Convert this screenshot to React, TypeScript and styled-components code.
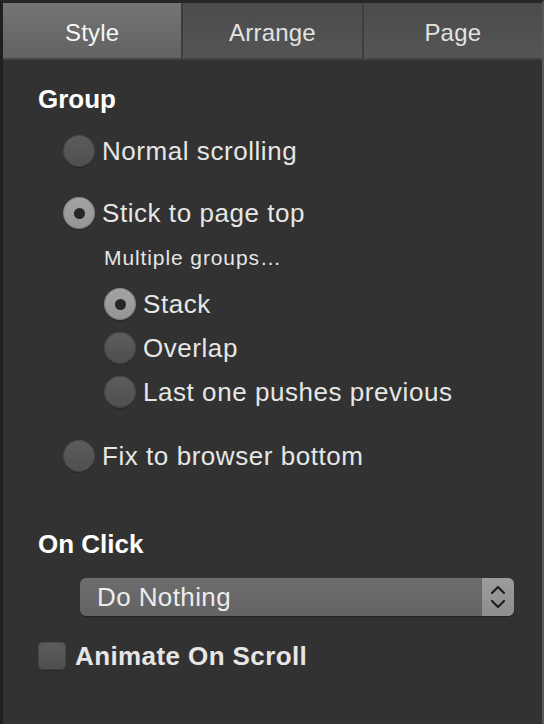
import React from "react"
import styled, { createGlobalStyle } from "styled-components"

const GlobalStyle = createGlobalStyle`
  html, body {
    margin: 0;
    padding: 0;
    background: #323232;
  }
  body {
    font-family: "Liberation Sans", Arial, sans-serif;
  }
`

type Option = { label: string; checked?: boolean }

const mainOptions: Option[] = [
  { label: "Normal scrolling" },
  { label: "Stick to page top", checked: true },
]

const stackOptions: Option[] = [
  { label: "Stack", checked: true },
  { label: "Overlap" },
  { label: "Last one pushes previous" },
]

const tabs = ["Style", "Arrange", "Page"]

const App: React.FC = () => {
  return (
    <>
      <GlobalStyle />
      <Panel>
        <TabBar>
          {tabs.map((t, i) => (
            <Tab key={t} $active={i === 0}>{t}</Tab>
          ))}
        </TabBar>
        <Content>
          <SectionTitle>Group</SectionTitle>
          <MainList>
            {mainOptions.map((o) => (
              <RadioRow key={o.label}>
                <Radio $checked={o.checked} />
                <RadioLabel>{o.label}</RadioLabel>
              </RadioRow>
            ))}
          </MainList>
          <SubBlock>
            <SubTitle>Multiple groups…</SubTitle>
            <SubList>
              {stackOptions.map((o) => (
                <RadioRow key={o.label}>
                  <Radio $checked={o.checked} />
                  <RadioLabel>{o.label}</RadioLabel>
                </RadioRow>
              ))}
            </SubList>
          </SubBlock>
          <FixRow>
            <Radio />
            <RadioLabel>Fix to browser bottom</RadioLabel>
          </FixRow>

          <ClickTitle>On Click</ClickTitle>
          <Select>
            <SelectValue>Do Nothing</SelectValue>
            <SelectArrows>
              <svg width="16" height="26" viewBox="0 0 16 26" fill="none">
                <path d="M2 9 L8 3 L14 9" stroke="#1e1e1e" strokeWidth="2.2" strokeLinecap="round" strokeLinejoin="round" />
                <path d="M2 17 L8 23 L14 17" stroke="#1e1e1e" strokeWidth="2.2" strokeLinecap="round" strokeLinejoin="round" />
              </svg>
            </SelectArrows>
          </Select>
          <CheckRow>
            <Checkbox />
            <CheckLabel>Animate On Scroll</CheckLabel>
          </CheckRow>
        </Content>
      </Panel>
    </>
  )
}

const Panel = styled.div`
  width: 544px;
  height: 724px;
  box-sizing: border-box;
  background: #323232;
  border-top: 3px solid #262626;
  border-left: 3px solid #1f1f1f;
  border-right: 2px solid #595959;
  display: flex;
  flex-direction: column;
  overflow: hidden;
`

const TabBar = styled.div`
  display: flex;
  height: 55px;
  border-bottom: 2px solid #434343;
  background: #4e4e4e;
`

const Tab = styled.div<{ $active?: boolean }>`
  flex: 1;
  display: flex;
  align-items: center;
  justify-content: center;
  padding-top: 4px;
  font-size: 24px;
  letter-spacing: 0.2px;
  color: ${(p) => (p.$active ? "#f6f6f6" : "#e2e2e2")};
  background: ${(p) =>
    p.$active
      ? "linear-gradient(to bottom, #747474, #626262)"
      : "linear-gradient(to bottom, #4b4b4b, #555555)"};
  & + & {
    border-left: 2px solid #3e3e3e;
  }
`

const Content = styled.div`
  display: flex;
  flex-direction: column;
  padding: 24px 0 0 35px;
`

const SectionTitle = styled.div`
  font-size: 26px;
  font-weight: bold;
  color: #ffffff;
  line-height: 30px;
  height: 30px;
`

const MainList = styled.div`
  display: flex;
  flex-direction: column;
  gap: 30px;
  margin: 21px 0 0 25px;
`

const RadioRow = styled.div`
  display: flex;
  align-items: center;
  height: 32px;
`

const Radio = styled.span<{ $checked?: boolean }>`
  position: relative;
  width: 32px;
  height: 32px;
  border-radius: 50%;
  box-sizing: border-box;
  flex: none;
  background: ${(p) =>
    p.$checked
      ? "linear-gradient(to bottom, #a4a4a4, #949494)"
      : "linear-gradient(to bottom, #5c5c5c, #4f4f4f)"};
  box-shadow: inset 0 0 0 1px rgba(0, 0, 0, 0.18), 0 1px 0 rgba(0, 0, 0, 0.25);
  &::after {
    content: "";
    display: ${(p) => (p.$checked ? "block" : "none")};
    position: absolute;
    left: 50%;
    top: 50%;
    width: 11px;
    height: 11px;
    margin: -5.5px 0 0 -5.5px;
    border-radius: 50%;
    background: #262626;
  }
`

const RadioLabel = styled.span`
  margin-left: 7px;
  font-size: 26px;
  letter-spacing: 0.55px;
  color: #e6e6e6;
  white-space: nowrap;
`

const SubBlock = styled.div`
  display: flex;
  flex-direction: column;
  margin: 16px 0 0 66px;
`

const SubTitle = styled.div`
  font-size: 21px;
  line-height: 26px;
  letter-spacing: 0.9px;
  color: #e6e6e6;
`

const SubList = styled.div`
  display: flex;
  flex-direction: column;
  gap: 12px;
  margin-top: 17px;
`

const FixRow = styled(RadioRow)`
  margin: 32px 0 0 25px;
`

const ClickTitle = styled(SectionTitle)`
  margin-top: 57px;
`

const Select = styled.div`
  display: flex;
  align-items: stretch;
  width: 434px;
  height: 38px;
  margin: 19px 0 0 42px;
  border-radius: 6px;
  overflow: hidden;
  background: linear-gradient(to bottom, #6d6d6d, #636363);
  box-shadow: 0 1px 1px rgba(0, 0, 0, 0.35);
`

const SelectValue = styled.div`
  flex: 1;
  display: flex;
  align-items: center;
  padding-left: 17px;
  font-size: 26px;
  letter-spacing: 0.4px;
  color: #ececec;
`

const SelectArrows = styled.div`
  width: 32px;
  display: flex;
  align-items: center;
  justify-content: center;
  background: linear-gradient(to bottom, #9c9c9c, #8e8e8e);
`

const CheckRow = styled.div`
  display: flex;
  align-items: center;
  height: 28px;
  margin-top: 26px;
`

const Checkbox = styled.span`
  width: 28px;
  height: 28px;
  box-sizing: border-box;
  border-radius: 5px;
  flex: none;
  background: linear-gradient(to bottom, #5c5c5c, #4f4f4f);
  box-shadow: inset 0 0 0 1px rgba(0, 0, 0, 0.18), 0 1px 0 rgba(0, 0, 0, 0.25);
`

const CheckLabel = styled.span`
  margin-left: 9px;
  font-size: 26px;
  font-weight: bold;
  letter-spacing: 0.4px;
  color: #e6e6e6;
`

export default App
